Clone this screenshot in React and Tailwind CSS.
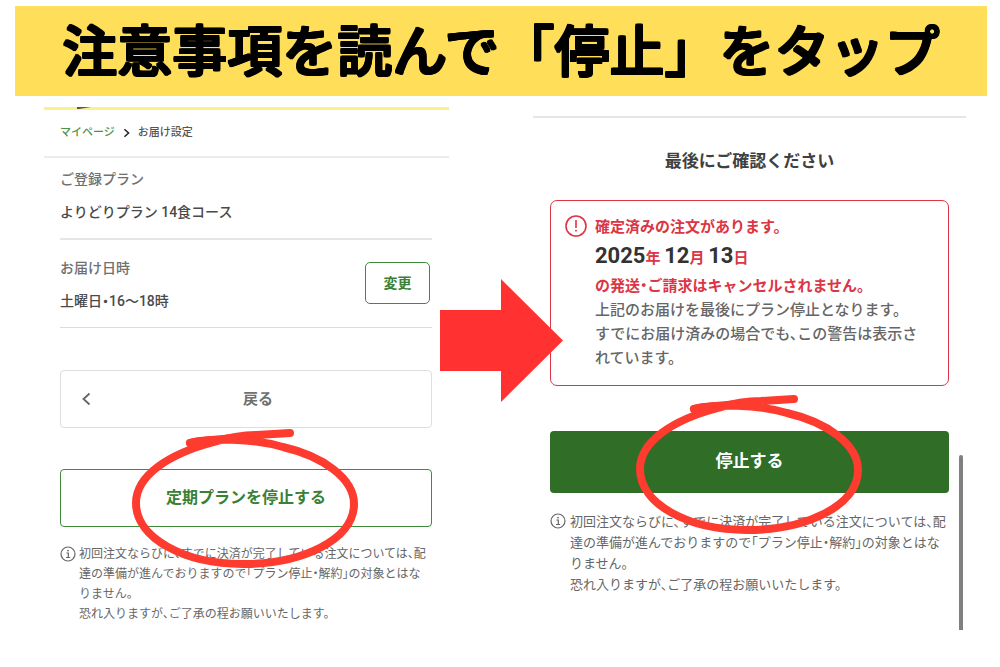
import React from "react";

function HandCircle({ className }) {
  return (
    <svg
      viewBox="0 0 228 144"
      aria-hidden="true"
      className={`pointer-events-none absolute left-1/2 h-[144px] w-[228px] -translate-x-1/2 ${className}`}
      fill="none"
      stroke="#fd3b2f"
      strokeWidth="8"
      strokeLinecap="round"
      strokeLinejoin="round"
    >
      <path d="M58 15 C80 10 120 10 151 19 C190 28 222 50 222 76 C222 112 170 136 111 136 C52 136 4 110 4 75 C4 48 36 26 82 14 C98 9 112 7 125 7 L158 5" />
      <path d="M58 15 C62 12 90 12 110 9" />
    </svg>
  );
}

function InfoIcon() {
  return (
    <svg viewBox="0 0 16 16" aria-hidden="true" className="mt-[2px] size-4 shrink-0" fill="none" stroke="#666" strokeWidth="1.2">
      <circle cx="8" cy="8" r="7" />
      <path d="M6.4 7H8.3V11.4M6 11.5H10.2" />
      <circle cx="8" cy="4.6" r="0.9" fill="#666" stroke="none" />
    </svg>
  );
}

function Note({ className }) {
  return (
    <div className={`flex text-[#666] ${className}`}>
      <InfoIcon />
      <p>
        初回注文ならびに、すでに決済が完了している注文については、配
        <br />
        達の準備が進んでおりますので「プラン停止・解約」の対象とはな
        <br />
        りません。
        <br />
        恐れ入りますが、ご了承の程お願いいたします。
      </p>
    </div>
  );
}

function PlanSettings() {
  return (
    <section className="min-w-0 flex-[405] pt-[11px] pb-[6px]">
      <div className="h-[3px] bg-[#fdf08a]">
        <svg viewBox="0 0 14 2" aria-hidden="true" className="ml-[33px] h-[2px] w-[14px]">
          <path d="M0 0H14L2 2H0Z" fill="#555" />
        </svg>
      </div>
      <nav aria-label="パンくず" className="flex h-[48px] items-center gap-2 border-b-2 border-[#ececec] px-4 text-[11px] font-medium">
        <a href="#mypage" className="text-[#4f934b]">
          マイページ
        </a>
        <svg viewBox="0 0 8 12" aria-hidden="true" className="h-[10px] w-[7px]" fill="none" stroke="#222" strokeWidth="1.8">
          <path d="M1.5 1.5L6.5 6L1.5 10.5" />
        </svg>
        <span className="text-[#555]">お届け設定</span>
      </nav>
      <div className="pr-[17px] pl-4">
        <dl className="text-[14px] leading-5 font-medium">
          <div className="border-b-2 border-[#e6e6e6] pt-[11px] pb-4">
            <dt className="text-[#707070]">ご登録プラン</dt>
            <dd className="mt-[13px] text-[#4a4a4a]">よりどりプラン 14食コース</dd>
          </div>
          <div className="flex items-center justify-between border-b border-[#dcdcdc] pt-[18px] pb-4">
            <div>
              <dt className="text-[#707070]">お届け日時</dt>
              <dd className="mt-[13px] text-[#4a4a4a]">土曜日・16〜18時</dd>
            </div>
            <button type="button" className="mr-[2px] mb-1 h-[42px] w-[65px] rounded-[5px] border border-[#3f8a3b] font-bold text-[#3a8036]">
              変更
            </button>
          </div>
        </dl>
        <button type="button" className="mt-[42px] grid h-[58px] w-full grid-cols-[1fr_auto_1fr] items-center rounded-[4px] border border-[#dedede] px-5 text-[15px] font-bold text-[#707070]">
          <svg viewBox="0 0 10 14" aria-hidden="true" className="h-[14px] w-[10px]" fill="none" stroke="#666" strokeWidth="1.8">
            <path d="M8.5 1.5L2.5 7L8.5 12.5" />
          </svg>
          <span className="pl-6">戻る</span>
        </button>
        <div className="relative z-10 mt-[41px]">
          <button type="button" className="h-[58px] w-full rounded-[4px] border border-[#3f8a3b] text-[16px] font-bold text-[#3a8036]">
            定期プランを停止する
          </button>
          <HandCircle className="-top-[41px]" />
        </div>
        <Note className="mt-[17px] gap-[3px] text-[12px] leading-5 whitespace-nowrap" />
      </div>
    </section>
  );
}

function FinalConfirm() {
  return (
    <section className="relative min-w-0 flex-[433] pt-5">
      <div className="border-t-2 border-[#e6e6e6] px-[17px]">
        <h2 className="mt-[31px] text-center text-[17px] leading-6 font-bold text-[#404040]">最後にご確認ください</h2>
        <div role="alert" className="mt-[27px] flex gap-2 rounded-[7px] border border-[#dc3545] pt-[14px] pr-6 pb-[15px] pl-[14px]">
          <svg viewBox="0 0 22 22" aria-hidden="true" className="size-[22px] shrink-0" fill="none" stroke="#dc3545" strokeWidth="1.6">
            <circle cx="11" cy="11" r="10" />
            <path d="M11 5V13M11 14.8V16.6" />
          </svg>
          <div className="text-[15px] font-medium text-[#666]">
            <p className="font-bold text-[#dc3545]">
              <span className="block leading-[25px]">確定済みの注文があります。</span>
              <span className="block leading-8">
                <span className="text-[22px] text-[#333]">2025</span>年 <span className="text-[22px] text-[#333]">12</span>月{" "}
                <span className="text-[22px] text-[#333]">13</span>日
              </span>
              <span className="block leading-6">の発送・ご請求はキャンセルされません。</span>
            </p>
            <p className="leading-6">
              上記のお届けを最後にプラン停止となります。
              <br />
              すでにお届け済みの場合でも、この警告は表示されています。
            </p>
          </div>
        </div>
        <div className="relative z-10 mt-[45px]">
          <button type="button" className="h-[62px] w-full rounded-[4px] bg-[#306e27] text-[17px] font-bold text-white">
            停止する
          </button>
          <HandCircle className="-top-[37px]" />
        </div>
        <Note className="mt-[18px] gap-1 text-[13px] leading-[21px] whitespace-nowrap" />
      </div>
      <div aria-hidden="true" className="absolute right-[3px] bottom-0 h-[175px] w-1 rounded-t-full bg-[#808080]" />
    </section>
  );
}

export default function App() {
  return (
    <main lang="ja" className="min-h-screen bg-white pt-[6px] font-['Roboto','Noto_Sans_CJK_JP',sans-serif]">
      <h1 className="mr-[13px] ml-[15px] flex h-[90px] items-center justify-center bg-[#ffde59] pt-[3px] text-[55px] leading-none font-medium whitespace-nowrap text-black [text-shadow:1px_0_#000,-1px_0_#000,0_1px_#000,0_-1px_#000,1px_1px_#000,-1px_1px_#000,1px_-1px_#000,-1px_-1px_#000]">
        注意事項を読んで「停止」をタップ
      </h1>
      <div className="relative flex gap-[84px] pr-[34px] pl-[44px] [font-feature-settings:'halt']">
        <PlanSettings />
        <FinalConfirm />
        <svg viewBox="0 0 123 123" aria-hidden="true" className="pointer-events-none absolute top-[183px] left-[44%] z-20 size-[123px]">
          <path d="M0 31H61V0L123 61.5L61 123V92H0Z" fill="#ff3131" />
        </svg>
      </div>
    </main>
  );
}
